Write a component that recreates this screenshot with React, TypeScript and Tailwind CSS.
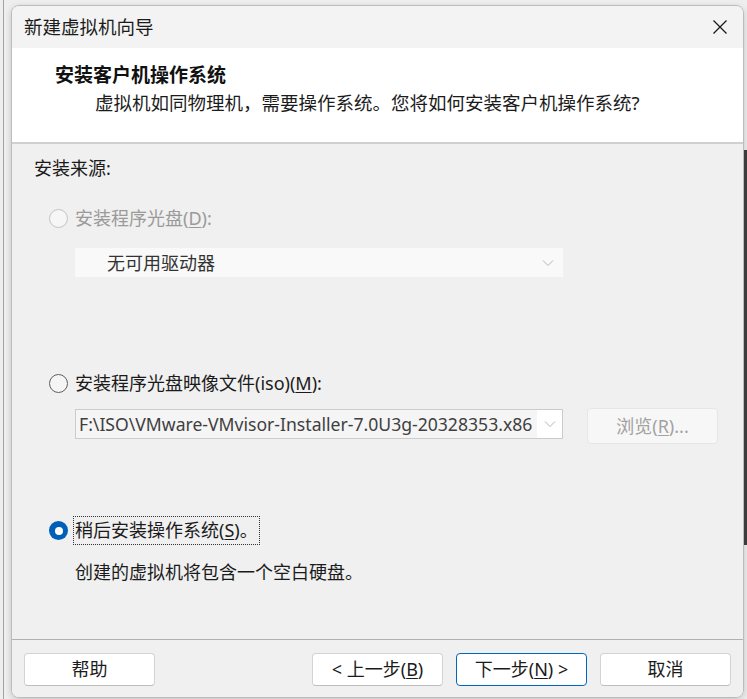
import React from "react";

function Radio({ state }: { state: "disabled" | "off" | "on" }) {
  if (state === "on") {
    return (
      <div className="flex h-[19px] w-[19px] shrink-0 items-center justify-center rounded-full bg-[#005fb8]">
        <div className="h-[8px] w-[8px] rounded-full bg-white" />
      </div>
    );
  }
  if (state === "off") {
    return <div className="h-[19px] w-[19px] shrink-0 rounded-full border border-[#5f5f5f] bg-[#f5f5f5]" />;
  }
  return <div className="h-[19px] w-[19px] shrink-0 rounded-full border border-[#c4c4c4] bg-[#f6f6f6]" />;
}

function Chevron({ color }: { color: string }) {
  return (
    <svg width="12" height="8" viewBox="0 0 12 8" fill="none">
      <polyline points="1,1.5 6,6.5 11,1.5" stroke={color} strokeWidth="1" />
    </svg>
  );
}

function FooterButton({ children, primary }: { children: React.ReactNode; primary?: boolean }) {
  return (
    <button
      className={
        primary
          ? "flex h-[33px] w-[131px] items-center justify-center rounded-[4px] border border-[#0067c0] bg-white text-[18px] text-[#1b1b1b]"
          : "flex h-[33px] w-[131px] items-center justify-center rounded-[4px] border border-[#d3d3d3] border-b-[#bdbdbd] bg-white text-[18px] text-[#1b1b1b]"
      }
    >
      {children}
    </button>
  );
}

export default function App() {
  return (
    <div className="flex h-[699px] w-[747px] overflow-hidden bg-[#eeeeee] font-['Noto_Sans','Noto_Sans_CJK_SC',sans-serif]">
      {/* left edge of the window behind */}
      <div className="flex w-[11px] shrink-0">
        <div className="w-[3px]" />
        <div className="h-full w-px bg-[#a3a3a3]" />
      </div>

      <div className="w-[733px] shrink-0 pt-[5px]">
        <div className="flex h-[693px] flex-col overflow-hidden rounded-[8px] border border-[#bcbcbc] shadow-[0_2px_6px_rgba(0,0,0,0.18)]">
          {/* title bar */}
          <div className="flex h-[42px] shrink-0 items-center justify-between bg-[#f3f3f3] pl-[12px]">
            <span className="text-[18.5px] leading-6 text-[#1b1b1b]">新建虚拟机向导</span>
            <div className="flex h-full w-[46px] items-center justify-center">
              <svg width="16" height="16" viewBox="0 0 16 16">
                <path d="M1.5 1.5 L14.5 14.5 M14.5 1.5 L1.5 14.5" stroke="#1b1b1b" strokeWidth="1.3" />
              </svg>
            </div>
          </div>

          {/* header */}
          <div className="h-[96px] shrink-0 border-b-2 border-[#d0d0d0] bg-white pt-[14px]">
            <div className="pl-[43px] text-[19px] font-bold leading-[26px] text-[#111]">安装客户机操作系统</div>
            <div className="mt-[2px] pl-[83px] text-[18.5px] leading-[26px] text-[#1b1b1b]">
              虚拟机如同物理机，需要操作系统。您将如何安装客户机操作系统?
            </div>
          </div>

          {/* content */}
          <div className="flex flex-1 flex-col bg-[#f0f0f0] pl-[22px] pt-[12px] text-[18px] text-[#1b1b1b]">
            <div className="h-6 leading-6">安装来源:</div>

            <div className="mt-[26px] flex h-6 items-center gap-[7px] pl-[15px]">
              <Radio state="disabled" />
              <span className="leading-6 text-[#9a9a9a]">
                安装程序光盘(<span className="underline underline-offset-2">D</span>):
              </span>
            </div>

            <div className="ml-[41px] mt-[18px] flex h-[29px] w-[488px] items-center justify-between bg-[#f9f9f9] pl-[32px] pr-[9px]">
              <span className="leading-6 text-[#333]">无可用驱动器</span>
              <Chevron color="#b5b5b5" />
            </div>

            <div className="mt-[94px] flex h-6 items-center gap-[7px] pl-[15px]">
              <Radio state="off" />
              <span className="leading-6">
                安装程序光盘映像文件(iso)(<span className="underline underline-offset-2">M</span>):
              </span>
            </div>

            <div className="ml-[41px] mt-[13px] flex items-start gap-[24px]">
              <div className="mt-px flex h-[30px] w-[488px] items-stretch border border-[#cbcbcb] bg-white">
                <div className="flex w-[461px] items-center overflow-hidden whitespace-nowrap bg-[#f5f5f5] pl-[3px] text-[17.6px] text-[#3f3f3f]">
                  F:\ISO\VMware-VMvisor-Installer-7.0U3g-20328353.x86
                </div>
                <div className="flex flex-1 items-center justify-center">
                  <Chevron color="#b5b5b5" />
                </div>
              </div>
              <div className="flex h-[36px] w-[131px] items-center justify-center rounded-[4px] border border-[#e6e6e6] bg-[#f7f7f7] text-[#a2a2a2]">
                浏览(<span className="underline underline-offset-2">R</span>)...
              </div>
            </div>

            <div className="mt-[72px] flex h-[29px] items-center gap-[5px] pl-[15px]">
              <Radio state="on" />
              <span className="border border-dotted border-[#333] px-px leading-[27px]">
                稍后安装操作系统(<span className="underline underline-offset-2">S</span>)。
              </span>
            </div>

            <div className="mt-[15px] h-6 pl-[41px] leading-6">创建的虚拟机将包含一个空白硬盘。</div>
          </div>

          {/* footer */}
          <div className="flex h-[58px] shrink-0 items-start justify-between border-t border-[#b0b0b0] bg-[#f0f0f0] px-[12px] pt-[13px]">
            <FooterButton>帮助</FooterButton>
            <div className="flex gap-[13px]">
              <FooterButton>
                &lt; 上一步(<span className="underline underline-offset-2">B</span>)
              </FooterButton>
              <FooterButton primary>
                下一步(<span className="underline underline-offset-2">N</span>) &gt;
              </FooterButton>
              <FooterButton>取消</FooterButton>
            </div>
          </div>
        </div>
      </div>

      {/* right edge of whatever is behind */}
      <div className="flex flex-1 flex-col pt-[150px]">
        <div className="h-[395px] bg-[#3c3c3c]" />
      </div>
    </div>
  );
}
